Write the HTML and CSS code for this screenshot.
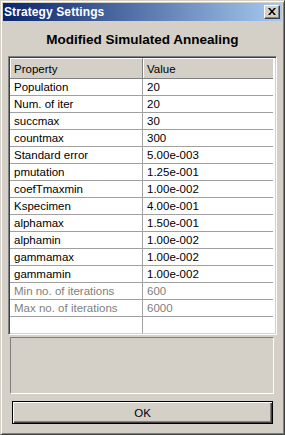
FILE: index.html
```html
<!DOCTYPE html>
<html>
<head>
<meta charset="utf-8">
<link rel="stylesheet" href="styles.css">
</head>
<body>
<div class="window">
  <div class="titlebar">
    <span class="title">Strategy Settings</span>
    <div class="close">
      <svg width="8" height="7" viewBox="0 0 8 7"><path d="M0 0h2l2 2.5L6 0h2L5 3.5 8 7H6L4 4.5 2 7H0l3-3.5z" fill="#000"/></svg>
    </div>
  </div>
  <div class="content">
    <h1 class="heading">Modified Simulated Annealing</h1>
    <div class="grid">
      <div class="row head"><div class="c1">Property</div><div class="c2">Value</div></div>
      <div class="row"><div class="c1">Population</div><div class="c2">20</div></div>
      <div class="row"><div class="c1">Num. of iter</div><div class="c2">20</div></div>
      <div class="row"><div class="c1">succmax</div><div class="c2">30</div></div>
      <div class="row"><div class="c1">countmax</div><div class="c2">300</div></div>
      <div class="row"><div class="c1">Standard error</div><div class="c2">5.00e-003</div></div>
      <div class="row"><div class="c1">pmutation</div><div class="c2">1.25e-001</div></div>
      <div class="row"><div class="c1">coefTmaxmin</div><div class="c2">1.00e-002</div></div>
      <div class="row"><div class="c1">Kspecimen</div><div class="c2">4.00e-001</div></div>
      <div class="row"><div class="c1">alphamax</div><div class="c2">1.50e-001</div></div>
      <div class="row"><div class="c1">alphamin</div><div class="c2">1.00e-002</div></div>
      <div class="row"><div class="c1">gammamax</div><div class="c2">1.00e-002</div></div>
      <div class="row"><div class="c1">gammamin</div><div class="c2">1.00e-002</div></div>
      <div class="row dis"><div class="c1">Min no. of iterations</div><div class="c2">600</div></div>
      <div class="row dis"><div class="c1">Max no. of iterations</div><div class="c2">6000</div></div>
      <div class="row empty"><div class="c1"></div><div class="c2"></div></div>
    </div>
    <div class="desc"></div>
    <div class="okwrap"><button class="ok">OK</button></div>
  </div>
</div>
</body>
</html>
```
FILE: styles.css
```css
* { box-sizing: border-box; }
html, body { margin: 0; padding: 0; background: #d4d0c8; }
body { font-family: "Liberation Sans", Arial, sans-serif; font-size: 11.5px; color: #000; }

.window {
  width: 285px;
  height: 435px;
  background: #d4d0c8;
  border-top: 1px solid #d4d0c8;
  border-left: 1px solid #d4d0c8;
  border-right: 1px solid #404040;
  border-bottom: 1px solid #404040;
  box-shadow: inset 1px 1px #fff, inset -1px -1px #808080;
  padding: 2px;
  display: flex;
  flex-direction: column;
}

.titlebar {
  height: 18px;
  background: linear-gradient(to right, #0a246a, #a6caf0);
  display: flex;
  align-items: center;
  justify-content: space-between;
  padding: 0 2px 0 1px;
  flex: none;
}
.title {
  color: #fff;
  font-family: "Liberation Sans", Arial, sans-serif;
  font-weight: bold;
  font-size: 12px;
  letter-spacing: 0.1px;
}
.close {
  width: 16px;
  height: 14px;
  background: #d4d0c8;
  border-top: 1px solid #fff;
  border-left: 1px solid #fff;
  border-right: 1px solid #404040;
  border-bottom: 1px solid #404040;
  box-shadow: inset -1px -1px #808080;
  display: flex;
  align-items: center;
  justify-content: center;
  padding: 0 1px 1px 0;
}

.content {
  flex: 1;
  display: flex;
  flex-direction: column;
  padding: 0 5px 0 5px;
}

.heading {
  margin: 0;
  height: 34px;
  display: flex;
  align-items: center;
  justify-content: center;
  font-family: "Liberation Sans", Arial, sans-serif;
  font-weight: bold;
  font-size: 13.5px;
  padding-top: 2px;
}

.grid {
  margin-top: 1px;
  width: 269px;
  height: 279px;
  background: #fff;
  border-top: 1px solid #808080;
  border-left: 1px solid #808080;
  border-right: 1px solid #fff;
  border-bottom: 1px solid #fff;
  box-shadow: inset 1px 1px #404040, inset -1px -1px #d4d0c8;
  padding: 1px 3px 1px 1px;
  display: flex;
  flex-direction: column;
}

.row {
  display: flex;
  height: 17px;
  border-bottom: 1px solid #a0a0a0;
  flex: none;
}
.row .c1 {
  width: 133px;
  border-right: 1px solid #a0a0a0;
  padding-left: 4px;
  line-height: 16px;
  white-space: nowrap;
  overflow: hidden;
}
.row .c2 {
  flex: 1;
  padding-left: 4px;
  line-height: 16px;
}
.row.head {
  height: 21px;
  background: #d4d0c8;
  border-bottom: 1px solid #808080;
}
.row.head .c1, .row.head .c2 {
  line-height: 20px;
  border-top: 1px solid #fff;
  box-shadow: inset 1px 0 #fff;
}
.row.head .c1 { border-right: 1px solid #808080; }
.row.dis { color: #808080; }
.row.empty { flex: 1; border-bottom: none; }

.desc {
  margin-top: 2px;
  margin-left: 2px;
  width: 264px;
  height: 57px;
  border-top: 1px solid #808080;
  border-left: 1px solid #808080;
  border-right: 1px solid #fff;
  border-bottom: 1px solid #fff;
}

.okwrap {
  padding: 7px 0 0 4px;
}
.ok {
  width: 261px;
  height: 23px;
  margin: 0;
  padding: 0;
  font-family: "Liberation Sans", Arial, sans-serif;
  font-size: 11.5px;
  color: #000;
  background: #d4d0c8;
  border: 1px solid #000;
  box-shadow: inset 1px 1px #fff, inset -1px -1px #404040, inset -2px -2px #808080;
}
```
